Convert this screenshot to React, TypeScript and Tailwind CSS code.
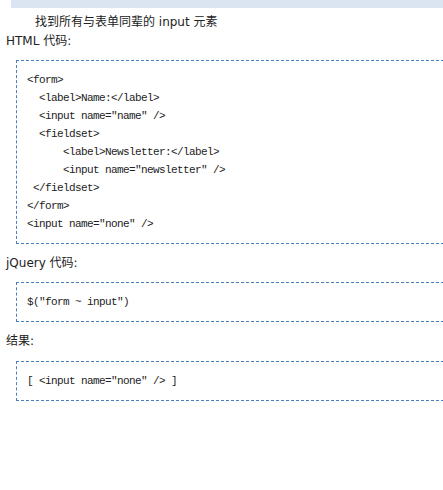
import React from 'react';

const codeLines = [
  '<form>',
  '  <label>Name:</label>',
  '  <input name="name" />',
  '  <fieldset>',
  '      <label>Newsletter:</label>',
  '      <input name="newsletter" />',
  ' </fieldset>',
  '</form>',
  '<input name="none" />',
];

const CodeBox = ({ lines }: { lines: string[] }) => (
  <div className="ml-4 -mr-4 border border-dashed border-[#4a7fc1] py-[10px] pl-[10px]">
    <pre className="m-0 whitespace-pre font-['Liberation_Mono',monospace] text-[11px] leading-[18px] tracking-[-0.6px] text-[#222]">
      {lines.join('\n')}
    </pre>
  </div>
);

const App = () => {
  return (
    <div className="min-h-[490px] w-[443px] overflow-hidden bg-white font-['DejaVu_Sans','Noto_Sans_CJK_SC',sans-serif] text-[12px] text-[#222]">
      {/* top bar */}
      <div className="ml-[11px] h-2 bg-[#dbe5f1]" />

      <p className="mt-[5px] pl-[35px] leading-[18px]">找到所有与表单同辈的 input 元素</p>
      <p className="mt-px pl-[6px] leading-[18px]">HTML 代码:</p>

      <div className="mt-[10px]">
        <CodeBox lines={codeLines} />
      </div>

      <p className="mt-[10px] pl-[6px] leading-[18px]">jQuery 代码:</p>
      <div className="mt-[10px]">
        <CodeBox lines={['$("form ~ input")']} />
      </div>

      <p className="mt-[10px] pl-[6px] leading-[18px]">结果:</p>
      <div className="mt-[11px]">
        <CodeBox lines={['[ <input name="none" /> ]']} />
      </div>
    </div>
  );
};

export default App;
